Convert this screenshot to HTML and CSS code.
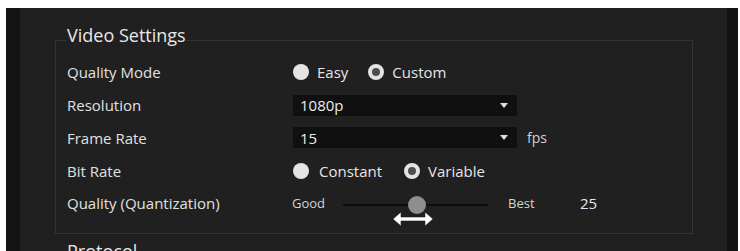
FILE: index.html
```html
<!DOCTYPE html>
<html>
<head>
<meta charset="utf-8">
<link rel="stylesheet" href="styles.css">
</head>
<body>
<div class="panel">
  <fieldset class="group">
    <legend>Video Settings</legend>
    <div class="row">
      <div class="label">Quality Mode</div>
      <div class="ctrl">
        <span class="opt"><span class="radio"></span>Easy</span>
        <span class="opt"><span class="radio checked"></span>Custom</span>
      </div>
    </div>
    <div class="row">
      <div class="label">Resolution</div>
      <div class="ctrl">
        <div class="select"><span>1080p</span><span class="caret"></span></div>
      </div>
    </div>
    <div class="row">
      <div class="label">Frame Rate</div>
      <div class="ctrl">
        <div class="select"><span>15</span><span class="caret"></span></div>
        <span class="unit">fps</span>
      </div>
    </div>
    <div class="row">
      <div class="label">Bit Rate</div>
      <div class="ctrl">
        <span class="opt wide"><span class="radio"></span>Constant</span>
        <span class="opt"><span class="radio checked"></span>Variable</span>
      </div>
    </div>
    <div class="row">
      <div class="label">Quality (Quantization)</div>
      <div class="ctrl">
        <span class="small good">Good</span>
        <div class="track">
          <span class="thumb"></span>
          <svg class="cursor" width="42" height="16" viewBox="0 0 42 16">
            <polygon points="1,8 9,1 9,6 33,6 33,1 41,8 33,15 33,10 9,10 9,15" fill="#ffffff" stroke="#222" stroke-width="0.6"/>
          </svg>
        </div>
        <span class="small best">Best</span>
        <span class="value">25</span>
      </div>
    </div>
  </fieldset>
  <fieldset class="group next">
    <legend>Protocol</legend>
  </fieldset>
</div>
</body>
</html>
```
FILE: styles.css
```css
html, body {
  margin: 0;
  height: 251px;
  overflow: hidden;
  background: #ffffff;
}
body {
  font-family: "Open Sans", "DejaVu Sans", sans-serif;
}
.panel {
  margin: 8px 2px 0 6px;
  height: 243px;
  box-sizing: border-box;
  padding-top: 17px;
  background: #202020;
  border-left: 14px solid #131313;
  border-right: 11px solid #121212;
  overflow: hidden;
}
.group {
  margin: 0 34px 0 35px;
  padding: 1px 0 13px 11px;
  border: 1px solid #333333;
  min-width: 0;
}
.group legend {
  padding: 0 0 10px 0;
  font-size: 18px;
  line-height: 20px;
  color: #e8e8e8;
}
.group.next {
  margin-top: 7px;
  height: 40px;
}
.row {
  display: grid;
  grid-template-columns: 226px 1fr;
  align-items: center;
  height: 32.75px;
}
.label {
  font-size: 15px;
  color: #e0e0e0;
  white-space: nowrap;
}
.ctrl {
  display: flex;
  align-items: center;
  font-size: 15px;
  color: #e6e6e6;
}
.opt {
  display: flex;
  align-items: center;
  gap: 8px;
  margin-right: 20px;
}
.opt.wide {
  gap: 10px;
  margin-right: 22px;
}
.radio {
  width: 16px;
  height: 16px;
  box-sizing: border-box;
  border-radius: 50%;
  background: #e4e4e4;
}
.radio.checked {
  border: 4.5px solid #e4e4e4;
  background: #4e4e4e;
}
.select {
  width: 224px;
  height: 21px;
  box-sizing: border-box;
  background: #101010;
  padding: 0 9px 0 7px;
  display: flex;
  align-items: center;
  justify-content: space-between;
  color: #ececec;
}
.caret {
  width: 0;
  height: 0;
  border-left: 4px solid transparent;
  border-right: 4px solid transparent;
  border-top: 5px solid #dddddd;
}
.unit {
  margin-left: 10px;
  font-size: 14px;
  color: #d2d2d2;
}
.small {
  font-size: 13px;
  color: #d4d4d4;
}
.good {
  width: 51px;
  margin-left: -1px;
}
.track {
  position: relative;
  width: 145px;
  height: 2px;
  margin-top: 3px;
  background: #0c0c0c;
}
.thumb {
  position: absolute;
  left: 65px;
  top: -8px;
  width: 18px;
  height: 18px;
  border-radius: 50%;
  background: #8e8e8e;
}
.cursor {
  position: absolute;
  left: 49px;
  top: 7px;
}
.best {
  margin-left: 20px;
  width: 72px;
}
.value {
  font-size: 15px;
  color: #e8e8e8;
}
```
